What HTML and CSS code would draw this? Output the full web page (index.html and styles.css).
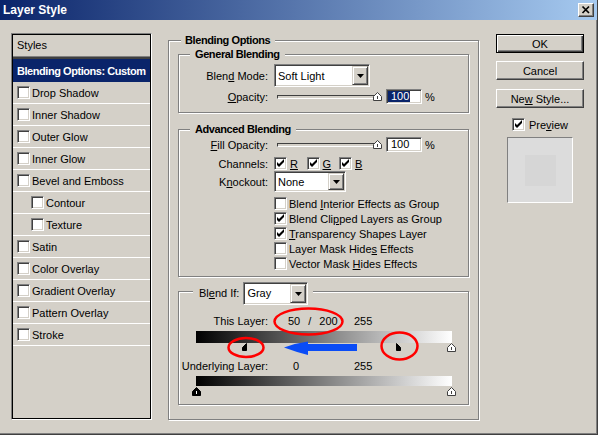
FILE: index.html
```html
<!DOCTYPE html>
<html>
<head>
<meta charset="utf-8">
<title>Layer Style</title>
<link rel="stylesheet" href="styles.css">
</head>
<body>
<div class="window">
  <div class="titlebar">
    <span class="title">Layer Style</span>
    <span class="close-btn"><svg width="14" height="12" viewBox="0 0 14 12"><path d="M3.5 2.5 L10 9 M10 2.5 L3.5 9" stroke="#000" stroke-width="1.7" fill="none"/></svg></span>
  </div>
  <div class="body">
    <div class="styles-list">
      <div class="sl-inner">
        <div class="sl-head">Styles</div>
        <div class="sl-item sel"><span>Blending Options: Custom</span></div>
        <div class="sl-item"><span class="cb"></span><span>Drop Shadow</span></div>
        <div class="sl-item"><span class="cb"></span><span>Inner Shadow</span></div>
        <div class="sl-item"><span class="cb"></span><span>Outer Glow</span></div>
        <div class="sl-item"><span class="cb"></span><span>Inner Glow</span></div>
        <div class="sl-item"><span class="cb"></span><span>Bevel and Emboss</span></div>
        <div class="sl-item sub"><span class="cb"></span><span>Contour</span></div>
        <div class="sl-item sub"><span class="cb"></span><span>Texture</span></div>
        <div class="sl-item"><span class="cb"></span><span>Satin</span></div>
        <div class="sl-item"><span class="cb"></span><span>Color Overlay</span></div>
        <div class="sl-item"><span class="cb"></span><span>Gradient Overlay</span></div>
        <div class="sl-item"><span class="cb"></span><span>Pattern Overlay</span></div>
        <div class="sl-item"><span class="cb"></span><span>Stroke</span></div>
      </div>
    </div>

    <div class="main">
      <div class="group outer">
        <div class="legend lg-outer">Blending Options</div>

        <div class="group general">
          <div class="legend lg-inner">General Blending</div>
          <div class="row r-mode">
            <span class="lbl">Blen<u>d</u> Mode:</span>
            <div class="select w-mode"><span class="sel-text">Soft Light</span><span class="sel-btn"><svg width="7" height="4" viewBox="0 0 7 4"><path d="M0 0 H7 L3.5 4 Z" fill="#000"/></svg></span></div>
          </div>
          <div class="row r-slider r-op">
            <span class="lbl"><u>O</u>pacity:</span>
            <div class="track"></div>
            <svg class="op-thumb" width="9" height="9" viewBox="0 0 9 9"><path d="M0.5 8.5 V4.5 L4.5 0.5 L8.5 4.5 V8.5 Z" fill="#fff" stroke="#404040"/><path d="M4.5 4 V7" stroke="#404040"/></svg>
            <span class="num"><span class="hl">100</span></span>
            <span class="pct">%</span>
          </div>
        </div>

        <div class="group advanced">
          <div class="legend lg-inner">Advanced Blending</div>
          <div class="row r-slider r-fill">
            <span class="lbl"><u>F</u>ill Opacity:</span>
            <div class="track"></div>
            <svg class="op-thumb" width="9" height="9" viewBox="0 0 9 9"><path d="M0.5 8.5 V4.5 L4.5 0.5 L8.5 4.5 V8.5 Z" fill="#fff" stroke="#404040"/><path d="M4.5 4 V7" stroke="#404040"/></svg>
            <span class="num"><span class="nv">100</span></span>
            <span class="pct">%</span>
          </div>
          <div class="row r-ch">
            <span class="lbl">Channels:</span>
            <span class="ch"><span class="cb"><svg width="11" height="11" viewBox="1 1 11 11"><path d="M3 5 L5 7 L10 2 L10 5 L5 10 L3 8 Z" fill="#000"/></svg></span><u>R</u></span>
            <span class="ch"><span class="cb"><svg width="11" height="11" viewBox="1 1 11 11"><path d="M3 5 L5 7 L10 2 L10 5 L5 10 L3 8 Z" fill="#000"/></svg></span><u>G</u></span>
            <span class="ch"><span class="cb"><svg width="11" height="11" viewBox="1 1 11 11"><path d="M3 5 L5 7 L10 2 L10 5 L5 10 L3 8 Z" fill="#000"/></svg></span><u>B</u></span>
          </div>
          <div class="row r-ko">
            <span class="lbl">K<u>n</u>ockout:</span>
            <div class="select w-ko"><span class="sel-text">None</span><span class="sel-btn"><svg width="7" height="4" viewBox="0 0 7 4"><path d="M0 0 H7 L3.5 4 Z" fill="#000"/></svg></span></div>
          </div>
          <div class="opts">
            <div class="opt"><span class="cb"></span><span>Blend <u>I</u>nterior Effects as Group</span></div>
            <div class="opt"><span class="cb"><svg width="11" height="11" viewBox="1 1 11 11"><path d="M3 5 L5 7 L10 2 L10 5 L5 10 L3 8 Z" fill="#000"/></svg></span><span>Blend Cli<u>p</u>ped Layers as Group</span></div>
            <div class="opt"><span class="cb"><svg width="11" height="11" viewBox="1 1 11 11"><path d="M3 5 L5 7 L10 2 L10 5 L5 10 L3 8 Z" fill="#000"/></svg></span><span><u>T</u>ransparency Shapes Layer</span></div>
            <div class="opt"><span class="cb"></span><span>Layer Mask Hide<u>s</u> Effects</span></div>
            <div class="opt"><span class="cb"></span><span>Vector Mask <u>H</u>ides Effects</span></div>
          </div>
        </div>

        <div class="group blendif">
          <div class="legend lg-if">
            <span>Bl<u>e</u>nd If:</span>
            <div class="select w-if"><span class="sel-text">Gray</span><span class="sel-btn"><svg width="7" height="4" viewBox="0 0 7 4"><path d="M0 0 H7 L3.5 4 Z" fill="#000"/></svg></span></div>
          </div>
          <div class="row r-val r-this">
            <span class="lbl">This Layer:</span>
            <span class="v1"><span>50</span><span class="slash">/</span><span>200</span></span>
            <span class="v2">255</span>
          </div>
          <div class="gbar bar1"></div>
          <svg class="thumbs" width="264" height="9" viewBox="0 0 264 9">
            <path d="M54.5 0.5 V7.5 H50.5 V4.5 Z" fill="#000" stroke="#000"/>
            <path d="M204.5 0.5 V7.5 H208.5 V4.5 Z" fill="#000" stroke="#000"/>
            <path d="M255.5 8.5 V4.5 L259.5 0.5 L263.5 4.5 V8.5 Z" fill="#fff" stroke="#404040"/>
            <path d="M259.5 4 V7" stroke="#404040"/>
          </svg>
          <div class="row r-val r-under">
            <span class="lbl">Underlying Layer:</span>
            <span class="v1 v1u">0</span>
            <span class="v2">255</span>
          </div>
          <div class="gbar bar2"></div>
          <svg class="thumbs thumbs2" width="264" height="9" viewBox="0 0 264 9">
            <path d="M0.5 8.5 V4.5 L4.5 0.5 L8.5 4.5 V8.5 Z" fill="#000" stroke="#000"/>
            <path d="M4.5 4 V7" stroke="#fff"/>
            <path d="M255.5 8.5 V4.5 L259.5 0.5 L263.5 4.5 V8.5 Z" fill="#fff" stroke="#404040"/>
            <path d="M259.5 4 V7" stroke="#404040"/>
          </svg>
        </div>
      </div>
    </div>

    <div class="buttons">
      <div class="btn btn-default"><span>OK</span></div>
      <div class="btn btn-cancel"><span>Cancel</span></div>
      <div class="btn btn-new"><span>Ne<u>w</u> Style...</span></div>
      <div class="preview-row"><span class="cb"><svg width="11" height="11" viewBox="1 1 11 11"><path d="M3 5 L5 7 L10 2 L10 5 L5 10 L3 8 Z" fill="#000"/></svg></span><span>Pre<u>v</u>iew</span></div>
      <div class="preview-box"><div class="preview-inner"></div></div>
    </div>
  </div>

  <svg class="annot" width="598" height="435" viewBox="0 0 598 435">
    <ellipse cx="308.5" cy="321.5" rx="34" ry="13" fill="none" stroke="#ff0000" stroke-width="2.5"/>
    <ellipse cx="246" cy="347.5" rx="17.5" ry="9.5" fill="none" stroke="#ff0000" stroke-width="2.5"/>
    <ellipse cx="399.5" cy="346" rx="18" ry="13.5" fill="none" stroke="#ff0000" stroke-width="2.5"/>
    <path d="M284 347.5 Q296 343 308 341.5 L308 344 L357 344 L357 351 L308 351 L308 355 Q296 352 284 347.5 Z" fill="#0a4cf6"/>
  </svg>
</div>
</body>
</html>
```

FILE: styles.css
```css
html, body {
  margin: 0;
  padding: 0;
}

body {
  background: #d4d0c8;
  font-family: "Liberation Sans", Arial, sans-serif;
  font-size: 11px;
  color: #000;
  overflow: hidden;
}

.window {
  position: relative;
  width: 598px;
  height: 435px;
  box-sizing: border-box;
  background: #d4d0c8;
  border-right: 1px solid #404040;
  border-bottom: 1px solid #404040;
  box-shadow: inset -1px -1px #808080;
}

/* title bar */
.titlebar {
  height: 20px;
  display: flex;
  align-items: center;
  justify-content: space-between;
  padding: 0 3px 0 3px;
  background: linear-gradient(to right, #0a246a, #a6caf0);
}

.title {
  color: #fff;
  font-weight: bold;
  font-size: 12px;
}

.close-btn {
  width: 16px;
  height: 14px;
  box-sizing: border-box;
  display: flex;
  align-items: center;
  justify-content: center;
  background: #d4d0c8;
  border: 1px solid;
  border-color: #fff #404040 #404040 #fff;
  box-shadow: inset -1px -1px #808080;
}

/* layout */
.body {
  display: flex;
  align-items: flex-start;
  padding: 13px 0 0 11px;
}

/* styles list */
.styles-list {
  width: 141px;
  height: 387px;
  box-sizing: border-box;
  border: 1px solid;
  border-color: #808080 #fff #fff #808080;
}

.sl-inner {
  height: 100%;
  box-sizing: border-box;
  border: 1px solid #000;
}

.sl-head {
  height: 21px;
  line-height: 21px;
  padding-left: 4px;
  border-bottom: 1px solid #808080;
}

.sl-item {
  height: 21px;
  display: flex;
  align-items: center;
  gap: 2px;
  padding-left: 4px;
  border-bottom: 1px solid #fff;
  white-space: nowrap;
}

.sl-item.sel {
  height: 23px;
  border-top: 2px solid #404040;
  border-bottom: none;
  background: #0a246a;
  color: #fff;
  font-weight: bold;
  letter-spacing: -0.45px;
}

.sl-item.sub {
  padding-left: 18px;
}

/* checkbox */
.cb {
  width: 13px;
  height: 13px;
  flex: none;
  box-sizing: border-box;
  display: inline-flex;
  background: #fff;
  border: 1px solid;
  border-color: #808080 #fff #fff #808080;
  box-shadow: inset 1px 1px #404040, inset -1px -1px #d4d0c8;
}

/* groups */
.main {
  margin: 7px 0 0 16px;
}

.group {
  border: 1px solid #808080;
  box-shadow: inset 1px 1px #fff, 1px 1px #fff;
}

.outer {
  width: 311px;
  box-sizing: border-box;
  padding: 0 9px 14px 9px;
}

.legend {
  width: max-content;
  height: 13px;
  line-height: 13px;
  margin-top: -7px;
  background: #d4d0c8;
  font-weight: bold;
  letter-spacing: -0.4px;
}

.lg-outer {
  margin-left: 3px;
  padding: 0 5px 0 4px;
}

.lg-inner {
  margin-left: 11px;
  padding: 0 5px;
}

.general {
  margin-top: 7px;
  padding-bottom: 8px;
}

.advanced {
  margin-top: 16px;
  padding-bottom: 5px;
}

.blendif {
  margin-top: 14px;
  padding-bottom: 8px;
}

.row {
  display: flex;
  align-items: center;
}

.lbl {
  width: 89px;
  flex: none;
  text-align: right;
  margin-right: 6px;
  white-space: nowrap;
}

.r-mode {
  margin-top: 3px;
  height: 23px;
}

.r-op {
  margin-top: 2px;
  height: 15px;
}

.r-fill {
  margin-top: 1px;
  height: 15px;
}

/* select */
.select {
  display: flex;
  box-sizing: border-box;
  background: #fff;
  border: 1px solid;
  border-color: #808080 #fff #fff #808080;
  box-shadow: inset 1px 1px #404040, inset -1px -1px #d4d0c8;
  padding: 1px;
}

.sel-text {
  flex: 1;
  display: flex;
  align-items: center;
  padding-left: 2px;
  white-space: nowrap;
}

.sel-btn {
  width: 16px;
  flex: none;
  box-sizing: border-box;
  display: flex;
  align-items: center;
  justify-content: center;
  background: #d4d0c8;
  border: 1px solid;
  border-color: #d4d0c8 #404040 #404040 #d4d0c8;
  box-shadow: inset 1px 1px #fff, inset -1px -1px #808080;
}

.w-mode {
  width: 96px;
  height: 23px;
}

.w-ko {
  width: 72px;
  height: 21px;
}

.w-if {
  width: 65px;
  height: 23px;
}

/* slider */
.track {
  width: 100px;
  height: 4px;
  margin-left: 3px;
  box-sizing: border-box;
  background: #d4d0c8;
  border: 1px solid;
  border-color: #404040 #fff #fff #404040;
}

.op-thumb {
  display: block;
  margin-left: -4px;
}

.num {
  width: 36px;
  height: 15px;
  margin-left: 4px;
  box-sizing: border-box;
  display: flex;
  align-items: center;
  background: #fff;
  border: 1px solid;
  border-color: #808080 #fff #fff #808080;
  box-shadow: inset 1px 1px #404040, inset -1px -1px #d4d0c8;
  padding: 1px;
}

.hl,
.nv {
  line-height: 11px;
  padding: 0 1px 0 3px;
}

.hl {
  background: #0a246a;
  color: #fff;
}

.pct {
  margin-left: 3px;
}

/* channels */
.r-ch {
  margin-top: 5px;
  height: 13px;
}

.ch {
  display: flex;
  align-items: center;
  gap: 3px;
  width: 32.5px;
}

.r-ko {
  margin-top: 1px;
}

.opts {
  margin-top: 4px;
  padding-left: 95px;
}

.opt {
  height: 15px;
  display: flex;
  align-items: center;
  gap: 2px;
  white-space: nowrap;
}

/* blend if */
.lg-if {
  display: flex;
  align-items: center;
  gap: 4px;
  height: 23px;
  margin-top: -10px;
  margin-left: 14px;
  padding: 0 5px 0 6px;
  font-weight: normal;
  letter-spacing: 0;
}

.r-val {
  height: 14px;
}

.r-this {
  margin-top: 9px;
}

.r-under {
  margin-top: 7px;
}

.r-val .lbl {
  margin-right: 20px;
}

.v1 {
  width: 66px;
  display: flex;
}

.slash {
  margin: 0 8px;
}

.v1u {
  padding-left: 5px;
  box-sizing: border-box;
}

.gbar {
  width: 256px;
  margin-left: 17px;
  margin-top: 3px;
  background: linear-gradient(to right, #000, #fff);
}

.bar1 {
  height: 12px;
}

.bar2 {
  height: 10px;
}

.thumbs {
  display: block;
  margin-left: 13px;
}

.thumbs2 {
  margin-top: 1px;
}

/* buttons column */
.buttons {
  width: 88px;
  margin: 1px 0 0 17px;
  display: flex;
  flex-direction: column;
  align-items: center;
}

.btn {
  width: 88px;
  height: 19px;
  box-sizing: border-box;
  display: flex;
  align-items: center;
  justify-content: center;
  background: #d4d0c8;
  border: 1px solid;
  border-color: #fff #404040 #404040 #fff;
  box-shadow: inset -1px -1px #808080;
  white-space: nowrap;
}

.btn-default {
  border: 1px solid #000;
  box-shadow: inset 1px 1px #fff, inset -1px -1px #404040, inset -2px -2px #808080;
}

.btn-cancel {
  margin-top: 8px;
}

.btn-new {
  margin-top: 9px;
}

.preview-row {
  margin-top: 10px;
  height: 13px;
  display: flex;
  align-items: center;
  gap: 4px;
}

.preview-box {
  width: 66px;
  height: 66px;
  margin-top: 6px;
  box-sizing: border-box;
  display: flex;
  align-items: center;
  justify-content: center;
  background: #dcdcdc;
  border: 1px solid;
  border-color: #808080 #fff #fff #808080;
}

.preview-inner {
  width: 31px;
  height: 31px;
  background: #d6d6d6;
}

/* annotations drawn over the dialog */
.annot {
  position: absolute;
  top: 0;
  left: 0;
  pointer-events: none;
}
```
